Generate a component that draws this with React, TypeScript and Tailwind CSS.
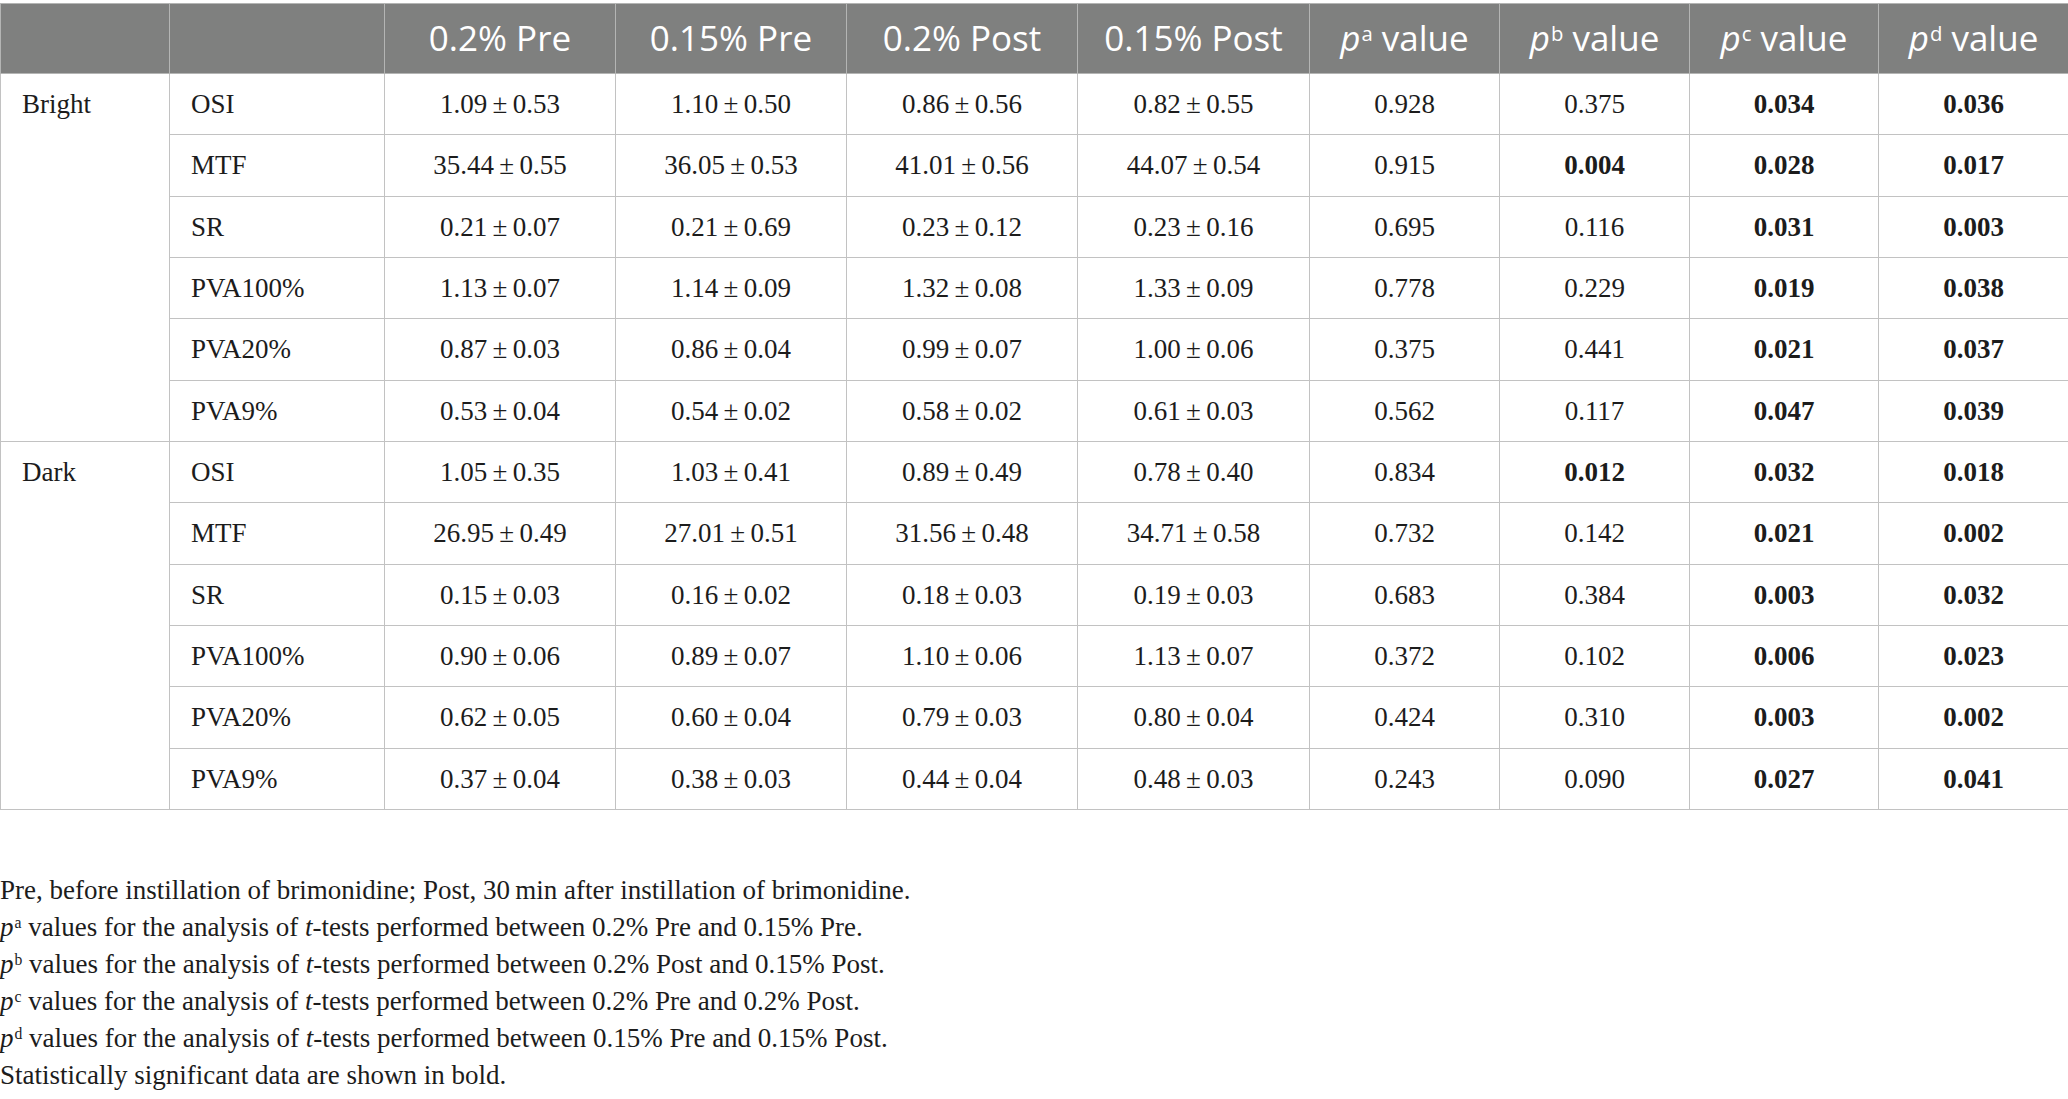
const rows = [
  { group: 'Bright', items: [
    ['OSI', '1.09', '0.53', '1.10', '0.50', '0.86', '0.56', '0.82', '0.55', '0.928', '0.375', '0.034', '0.036'],
    ['MTF', '35.44', '0.55', '36.05', '0.53', '41.01', '0.56', '44.07', '0.54', '0.915', '0.004', '0.028', '0.017'],
    ['SR', '0.21', '0.07', '0.21', '0.69', '0.23', '0.12', '0.23', '0.16', '0.695', '0.116', '0.031', '0.003'],
    ['PVA100%', '1.13', '0.07', '1.14', '0.09', '1.32', '0.08', '1.33', '0.09', '0.778', '0.229', '0.019', '0.038'],
    ['PVA20%', '0.87', '0.03', '0.86', '0.04', '0.99', '0.07', '1.00', '0.06', '0.375', '0.441', '0.021', '0.037'],
    ['PVA9%', '0.53', '0.04', '0.54', '0.02', '0.58', '0.02', '0.61', '0.03', '0.562', '0.117', '0.047', '0.039'],
  ] },
  { group: 'Dark', items: [
    ['OSI', '1.05', '0.35', '1.03', '0.41', '0.89', '0.49', '0.78', '0.40', '0.834', '0.012', '0.032', '0.018'],
    ['MTF', '26.95', '0.49', '27.01', '0.51', '31.56', '0.48', '34.71', '0.58', '0.732', '0.142', '0.021', '0.002'],
    ['SR', '0.15', '0.03', '0.16', '0.02', '0.18', '0.03', '0.19', '0.03', '0.683', '0.384', '0.003', '0.032'],
    ['PVA100%', '0.90', '0.06', '0.89', '0.07', '1.10', '0.06', '1.13', '0.07', '0.372', '0.102', '0.006', '0.023'],
    ['PVA20%', '0.62', '0.05', '0.60', '0.04', '0.79', '0.03', '0.80', '0.04', '0.424', '0.310', '0.003', '0.002'],
    ['PVA9%', '0.37', '0.04', '0.38', '0.03', '0.44', '0.04', '0.48', '0.03', '0.243', '0.090', '0.027', '0.041'],
  ] },
];

// p^b values that are significant (p^c and p^d are all bold)
const boldB = new Set(['0.004', '0.012']);

const headSans = { fontFamily: '"Open Sans", "Noto Sans", sans-serif' };

function P({ sup }: { sup: string }) {
  return (
    <>
      <i>p</i>
      <sup className="text-[0.58em] ml-[1px]">{sup}</sup>
    </>
  );
}

export default function App() {
  return (
    <div className="w-[2068px] bg-white pt-[3px] text-[#1c1c1c]" style={{ fontFamily: '"Liberation Serif", "Times New Roman", serif' }}>
      <table className="w-[2068px] table-fixed border-collapse">
        <colgroup>
          <col className="w-[169px]" />
          <col className="w-[215px]" />
          <col className="w-[231px]" />
          <col className="w-[231px]" />
          <col className="w-[231px]" />
          <col className="w-[232px]" />
          <col className="w-[190px]" />
          <col className="w-[190px]" />
          <col className="w-[189px]" />
          <col className="w-[190px]" />
        </colgroup>
        <thead>
          <tr className="h-[70px] bg-[#7f807f] text-white text-[35px]" style={headSans}>
            <th className="border border-[#b4b5b4]"></th>
            <th className="border border-[#b4b5b4]"></th>
            <th className="border border-[#b4b5b4] font-normal">0.2% Pre</th>
            <th className="border border-[#b4b5b4] font-normal">0.15% Pre</th>
            <th className="border border-[#b4b5b4] font-normal">0.2% Post</th>
            <th className="border border-[#b4b5b4] font-normal">0.15% Post</th>
            <th className="border border-[#b4b5b4] font-normal"><P sup="a" /> value</th>
            <th className="border border-[#b4b5b4] font-normal"><P sup="b" /> value</th>
            <th className="border border-[#b4b5b4] font-normal"><P sup="c" /> value</th>
            <th className="border border-[#b4b5b4] font-normal"><P sup="d" /> value</th>
          </tr>
        </thead>
        <tbody className="text-[27px]">
          {rows.map((g) =>
            g.items.map((r, i) => (
              <tr key={g.group + r[0]} className="h-[61.33px]">
                {i === 0 && (
                  <td rowSpan={6} className="border border-[#c2c2c2] align-top pl-[21px]">
                    <div className="h-[61.33px] flex items-center">{g.group}</div>
                  </td>
                )}
                <td className="border border-[#c2c2c2] pl-[21px]">{r[0]}</td>
                {[1, 3, 5, 7].map((k) => (
                  <td key={k} className="border border-[#c2c2c2] text-center">
                    {r[k]}{'\u2009±\u2009'}{r[k + 1]}
                  </td>
                ))}
                <td className="border border-[#c2c2c2] text-center">{r[9]}</td>
                <td className={boldB.has(r[10]) ? 'border border-[#c2c2c2] text-center font-bold' : 'border border-[#c2c2c2] text-center'}>
                  {r[10]}
                </td>
                <td className="border border-[#c2c2c2] text-center font-bold">{r[11]}</td>
                <td className="border border-[#c2c2c2] text-center font-bold">{r[12]}</td>
              </tr>
            ))
          )}
        </tbody>
      </table>

      <div className="mt-[62px] text-[27px] leading-[37px]">
        <p>Pre, before instillation of brimonidine; Post, 30{'\u2009'}min after instillation of brimonidine.</p>
        <p><P sup="a" /> values for the analysis of <i>t</i>-tests performed between 0.2% Pre and 0.15% Pre.</p>
        <p><P sup="b" /> values for the analysis of <i>t</i>-tests performed between 0.2% Post and 0.15% Post.</p>
        <p><P sup="c" /> values for the analysis of <i>t</i>-tests performed between 0.2% Pre and 0.2% Post.</p>
        <p><P sup="d" /> values for the analysis of <i>t</i>-tests performed between 0.15% Pre and 0.15% Post.</p>
        <p>Statistically significant data are shown in bold.</p>
      </div>
    </div>
  );
}
